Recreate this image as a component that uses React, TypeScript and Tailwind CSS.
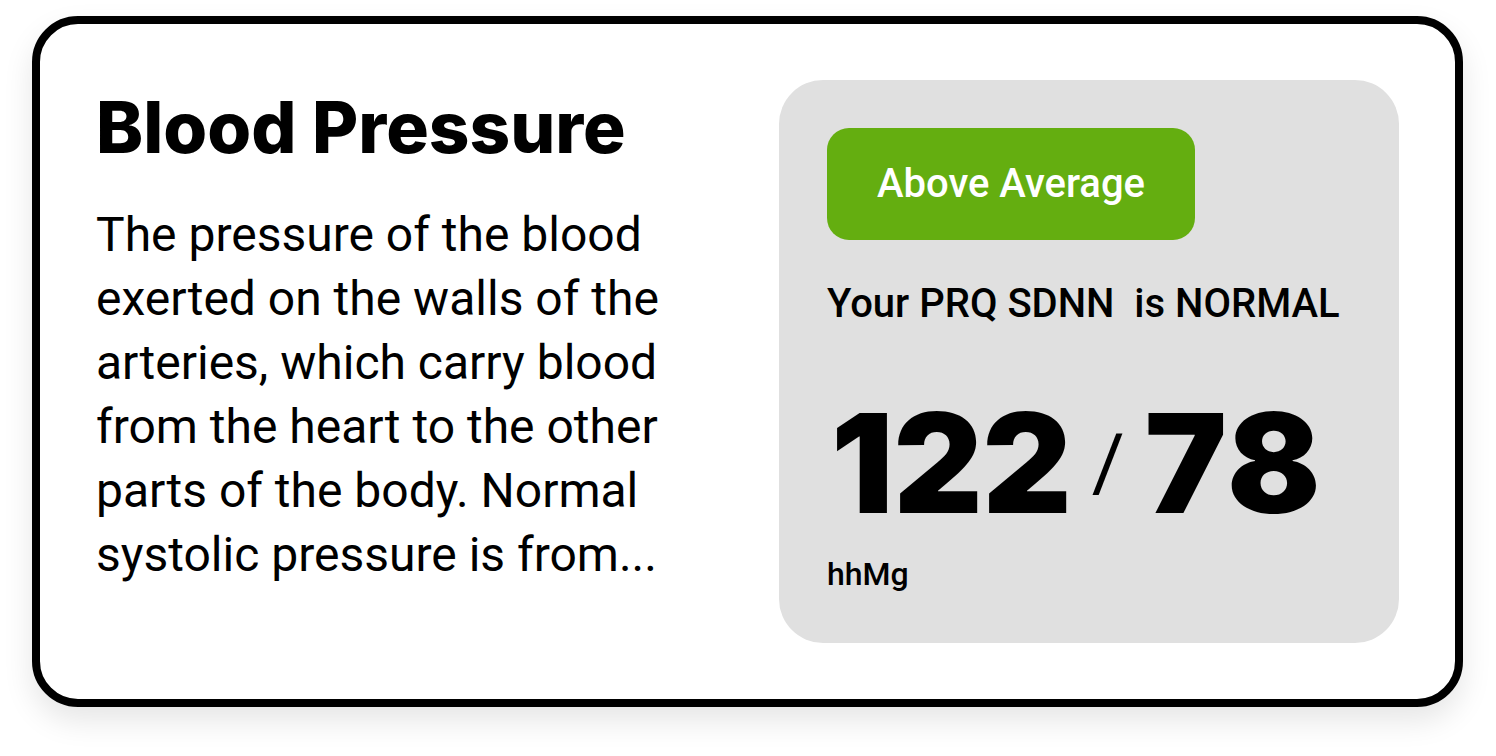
import React from 'react'

export default function App() {
  return (
    <div className="min-h-screen bg-white pl-8 pt-4">
      <div className="flex h-[691px] w-[1431px] justify-between rounded-[46px] border-[8px] border-black bg-white p-14 shadow-[0_14px_30px_rgba(0,0,0,0.10)]">
        {/* left: title + description */}
        <div className="w-[620px]">
          <h1 className="mt-[12px] font-['Inter','Noto_Sans',sans-serif] text-[71px] font-extrabold leading-none text-black">
            Blood Pressure
          </h1>
          <p className="mt-[40px] font-['Roboto','Noto_Sans',sans-serif] text-[48px] leading-[64px] text-black">
            The pressure of the blood exerted on the walls of the arteries, which carry blood from the heart to the
            other parts of the body. Normal systolic pressure is from...
          </p>
        </div>

        {/* right: reading panel */}
        <div className="flex w-[620px] flex-col rounded-[44px] bg-[#e0e0e0] p-12 font-['Roboto','Noto_Sans',sans-serif]">
          <div className="flex h-[112px] w-[368px] items-center justify-center rounded-[22px] bg-[#64ae10] text-[40px] font-medium text-white">
            Above Average
          </div>
          <div className="mt-[44px] whitespace-pre text-[40px] font-medium leading-none text-black">
            Your PRQ SDNN  is NORMAL
          </div>
          <div className="mt-[70px] flex items-center pl-[4px] leading-none text-black">
            <span className="font-['Inter',sans-serif] text-[138px] font-black">122</span>
            <span className="mx-[20px] text-[80px] font-normal">/</span>
            <span className="font-['Inter',sans-serif] text-[138px] font-black tracking-[2px]">78</span>
          </div>
          <div className="mt-[26px] text-[32px] font-medium leading-none text-black">hhMg</div>
        </div>
      </div>
    </div>
  )
}
